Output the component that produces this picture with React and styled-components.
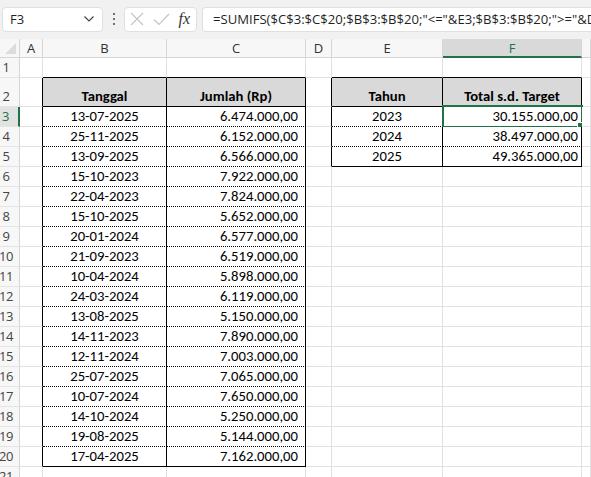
import React from "react";
import styled, { createGlobalStyle } from "styled-components";

const GlobalStyle = createGlobalStyle`
  html, body {
    margin: 0;
    padding: 0;
    background: #ffffff;
    overflow: hidden;
  }
  * { box-sizing: border-box; }
`;

const GREEN = "#217346";
const GRID = "#e1e1e1";

const rows = [
  ["13-07-2025", "6.474.000,00"],
  ["25-11-2025", "6.152.000,00"],
  ["13-09-2025", "6.566.000,00"],
  ["15-10-2023", "7.922.000,00"],
  ["22-04-2023", "7.824.000,00"],
  ["15-10-2025", "5.652.000,00"],
  ["20-01-2024", "6.577.000,00"],
  ["21-09-2023", "6.519.000,00"],
  ["10-04-2024", "5.898.000,00"],
  ["24-03-2024", "6.119.000,00"],
  ["13-08-2025", "5.150.000,00"],
  ["14-11-2023", "7.890.000,00"],
  ["12-11-2024", "7.003.000,00"],
  ["25-07-2025", "7.065.000,00"],
  ["10-07-2024", "7.650.000,00"],
  ["14-10-2024", "5.250.000,00"],
  ["19-08-2025", "5.144.000,00"],
  ["17-04-2025", "7.162.000,00"],
];

const totals = [
  ["2023", "30.155.000,00"],
  ["2024", "38.497.000,00"],
  ["2025", "49.365.000,00"],
];

const columns = ["A", "B", "C", "D", "E", "F", "G"];

const Page = styled.div`
  width: 591px;
  height: 477px;
  overflow: hidden;
  display: flex;
  flex-direction: column;
  font-family: "Carlito", "Lato", sans-serif;
`;

const Toolbar = styled.div`
  height: 39px;
  flex: none;
  background: #f1f1f1;
  display: flex;
  align-items: center;
  padding: 0 0 1px 2px;
`;

const Box = styled.div`
  height: 25px;
  background: #ffffff;
  border: 1px solid #e0e0e0;
  border-radius: 4px;
  display: flex;
  align-items: center;
  font-family: "Open Sans", "Noto Sans", sans-serif;
  font-size: 13px;
  color: #1f1f1f;
`;

const NameBox = styled(Box)`
  width: 101px;
  padding: 0 7px 0 7px;
  justify-content: space-between;
`;

const Dots = styled.div`
  width: 21px;
  display: flex;
  flex-direction: column;
  align-items: center;
  gap: 3px;
  span {
    width: 2px;
    height: 2px;
    background: #444;
    border-radius: 1px;
  }
`;

const FxBox = styled(Box)`
  width: 73px;
  padding: 0 4px 0 5px;
  justify-content: space-between;
`;

const Fx = styled.span`
  font-family: "Liberation Serif", "DejaVu Serif", serif;
  font-style: italic;
  font-size: 16px;
  color: #333;
  padding-right: 2px;
`;

const FormulaBox = styled(Box)`
  flex: 1;
  margin-left: 5px;
  padding-left: 10px;
  border-right: none;
  border-radius: 4px 0 0 4px;
  white-space: nowrap;
  overflow: hidden;
  font-size: 13.1px;
`;

const Sheet = styled.div`
  display: grid;
  grid-template-columns: 20px 23px 124px 139px 26px 111px 139px 1fr;
  grid-template-rows: 19px 20px 29px repeat(19, 20px);
  font-size: 14.7px;
  color: #000;
`;

const Corner = styled.div`
  background: #f7f7f7;
  border-right: 1px solid #d6d6d6;
  border-bottom: 1px solid #d6d6d6;
  position: relative;
  &::after {
    content: "";
    position: absolute;
    right: 3px;
    bottom: 3px;
    border-left: 11px solid transparent;
    border-bottom: 11px solid #dcdcdc;
  }
`;

const ColHead = styled.div`
  background: ${(p) => (p.$active ? "#d9d9d9" : "#f7f7f7")};
  color: ${(p) => (p.$active ? GREEN : "#333")};
  border-right: 1px solid #d6d6d6;
  border-bottom: ${(p) => (p.$active ? `2px solid ${GREEN}` : "1px solid #d6d6d6")};
  display: flex;
  align-items: center;
  justify-content: center;
  font-family: "Open Sans", "Noto Sans", sans-serif;
  font-size: 13px;
  padding-top: ${(p) => (p.$active ? "1px" : "0")};
`;

const RowHead = styled.div`
  background: ${(p) => (p.$active ? "#e2e2e2" : "#f7f7f7")};
  color: ${(p) => (p.$active ? GREEN : "#444")};
  border-right: ${(p) => (p.$active ? `2px solid ${GREEN}` : "1px solid #d6d6d6")};
  border-bottom: 1px solid #e4e4e4;
  display: flex;
  align-items: flex-end;
  justify-content: center;
  padding: 0 7px 1px 0;
  font-family: "Open Sans", "Noto Sans", sans-serif;
  font-size: 13px;
  letter-spacing: -0.4px;
`;

const edge = (kind) =>
  kind === "solid"
    ? "1px solid #000"
    : kind === "dot"
    ? "1px dotted #000"
    : `1px solid ${GRID}`;

const Cell = styled.div`
  position: relative;
  background: ${(p) => (p.$fill ? "#d9d9d9" : "#fff")};
  border-right: ${(p) => edge(p.$right)};
  border-bottom: ${(p) => edge(p.$bottom)};
  display: flex;
  align-items: flex-end;
  justify-content: ${(p) =>
    p.$align === "right" ? "flex-end" : p.$align === "center" ? "center" : "flex-start"};
  padding: 0 ${(p) => p.$padRight || 3}px 1px 3px;
  font-weight: ${(p) => (p.$bold ? 700 : 400)};
  white-space: nowrap;
  line-height: 18px;
`;

const Selection = styled.div`
  position: absolute;
  left: -1px;
  top: -2px;
  right: -2px;
  bottom: -2px;
  border: 2px solid ${GREEN};
  pointer-events: none;
  &::after {
    content: "";
    position: absolute;
    right: -4px;
    bottom: -4px;
    width: 6px;
    height: 6px;
    background: ${GREEN};
    border: 1px solid #fff;
  }
`;

function Chevron() {
  return (
    <svg width="12" height="8" viewBox="0 0 12 8">
      <path d="M1.5 1.5 L6 6 L10.5 1.5" fill="none" stroke="#444" strokeWidth="1.2" />
    </svg>
  );
}

function CrossIcon() {
  return (
    <svg width="14" height="14" viewBox="0 0 14 14">
      <path d="M1 1 L13 13 M13 1 L1 13" stroke="#c4c4c4" strokeWidth="1.1" />
    </svg>
  );
}

function CheckIcon() {
  return (
    <svg width="17" height="13" viewBox="0 0 17 13">
      <path d="M1 6.5 L6 11.5 L16 1" fill="none" stroke="#c4c4c4" strokeWidth="1.1" />
    </svg>
  );
}

// which border each cell owns on its right / bottom edge
function cellBorders(r, c) {
  let right = "grid";
  let bottom = "grid";
  const inLeft = r >= 2 && r <= 20;
  const inRight = r >= 2 && r <= 5;
  if (c === "A" && inLeft) right = "solid";
  if (c === "D" && inRight) right = "solid";
  if (c === "B" || c === "C") {
    if (inLeft) right = "solid";
    if (r === 1 || r === 2 || r === 20) bottom = "solid";
    else if (r >= 3 && r <= 19) bottom = "dot";
  }
  if (c === "E" || c === "F") {
    if (inRight) right = "solid";
    if (r === 1 || r === 2 || r === 5) bottom = "solid";
    else if (r >= 3 && r <= 4) bottom = "dot";
  }
  return { right, bottom };
}

function cellContent(r, c) {
  if (r === 2) {
    if (c === "B") return { text: "Tanggal", bold: true, fill: true, align: "center" };
    if (c === "C") return { text: "Jumlah (Rp)", bold: true, fill: true, align: "center" };
    if (c === "E") return { text: "Tahun", bold: true, fill: true, align: "center" };
    if (c === "F") return { text: "Total s.d. Target", bold: true, fill: true, align: "center" };
  }
  if (r >= 3 && r <= 20) {
    const row = rows[r - 3];
    if (c === "B") return { text: row[0], align: "center" };
    if (c === "C") return { text: row[1], align: "right", pad: 7 };
  }
  if (r >= 3 && r <= 5) {
    const t = totals[r - 3];
    if (c === "E") return { text: t[0], align: "center" };
    if (c === "F") return { text: t[1], align: "right", pad: 3 };
  }
  return { text: "" };
}

export default function App() {
  const rowNums = Array.from({ length: 21 }, (_, i) => i + 1);
  return (
    <Page>
      <GlobalStyle />
      <Toolbar>
        <NameBox>
          <span>F3</span>
          <Chevron />
        </NameBox>
        <Dots>
          <span />
          <span />
          <span />
        </Dots>
        <FxBox>
          <CrossIcon />
          <CheckIcon />
          <Fx>fx</Fx>
        </FxBox>
        <FormulaBox>
          =SUMIFS($C$3:$C$20;$B$3:$B$20;"&lt;="&amp;E3;$B$3:$B$20;"&gt;="&amp;D3)
        </FormulaBox>
      </Toolbar>
      <Sheet>
        <Corner />
        {columns.map((c) => (
          <ColHead key={c} $active={c === "F"}>
            {c === "G" ? "" : c}
          </ColHead>
        ))}
        {rowNums.map((r) => (
          <React.Fragment key={r}>
            <RowHead $active={r === 3}>{r}</RowHead>
            {columns.map((c) => {
              const b = cellBorders(r, c);
              const v = cellContent(r, c);
              return (
                <Cell
                  key={c}
                  $right={b.right}
                  $bottom={b.bottom}
                  $fill={v.fill}
                  $bold={v.bold}
                  $align={v.align}
                  $padRight={v.pad}
                >
                  {v.text}
                  {r === 3 && c === "F" && <Selection />}
                </Cell>
              );
            })}
          </React.Fragment>
        ))}
      </Sheet>
    </Page>
  );
}
